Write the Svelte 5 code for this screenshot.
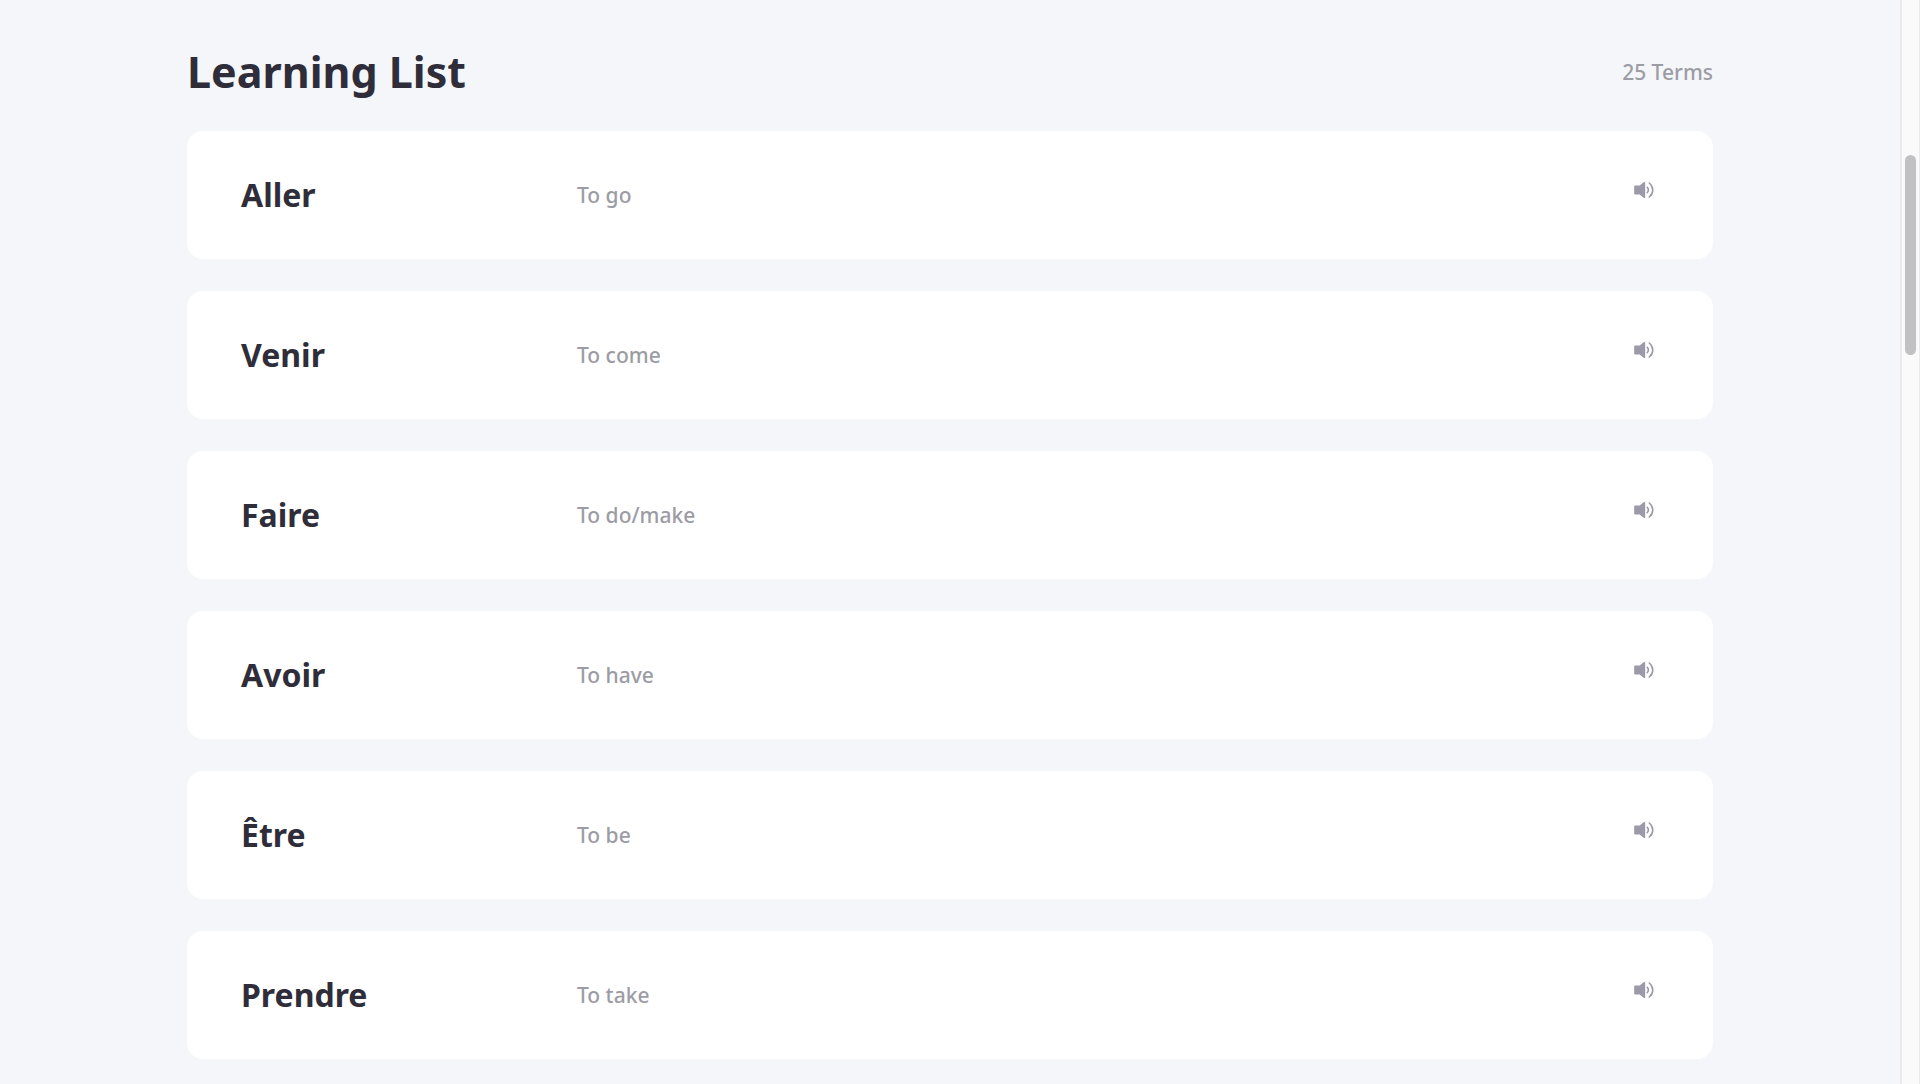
<script lang="ts">
    const total = 25;

    const terms = [
        { word: 'Aller', meaning: 'To go' },
        { word: 'Venir', meaning: 'To come' },
        { word: 'Faire', meaning: 'To do/make' },
        { word: 'Avoir', meaning: 'To have' },
        { word: 'Être', meaning: 'To be' },
        { word: 'Prendre', meaning: 'To take' }
    ];

    function speak(word: string) {
        const utterance = new SpeechSynthesisUtterance(word);
        utterance.lang = 'fr-FR';
        speechSynthesis.speak(utterance);
    }
</script>

<div class="page">
    <main class="content">
        <header class="list-header">
            <h1>Learning List</h1>
            <span class="count">{total} Terms</span>
        </header>

        <ul class="terms">
            {#each terms as term}
                <li class="card">
                    <h2>{term.word}</h2>
                    <p>{term.meaning}</p>
                    <button type="button" aria-label="Listen to {term.word}" onclick={() => speak(term.word)}>
                        <svg viewBox="0 0 20 18" width="20" height="18" aria-hidden="true">
                            <path
                                d="M1 4.500h4.600L10 1.100q1.200-.6 1.200.6v14.600q0 1.200-1.200.6L5.600 13.500H1q-.8 0-.8-.9V5.400q0-.9.8-.9z"
                                fill="currentColor"
                            />
                            <path
                                d="M13.200 6.300q2.400 2.700 0 5.400M15.300 2c4.600 3.800 4.600 10.200 0 14"
                                fill="none"
                                stroke="currentColor"
                                stroke-width="1.600"
                                stroke-linecap="round"
                            />
                        </svg>
                    </button>
                </li>
            {/each}
        </ul>
    </main>

    <div class="scroll-track">
        <div class="scroll-thumb"></div>
    </div>
</div>

<style>
    :global(body) {
        margin: 0;
        background: #f4f6fa;
    }

    .page {
        display: flex;
        min-height: 100vh;
        font-family: 'Noto Sans', sans-serif;
        color: #2e2d39;
    }

    .content {
        flex: 1;
        padding: 42px 187px 24px;
    }

    .list-header {
        display: flex;
        align-items: center;
        justify-content: space-between;
        margin-bottom: 29px;
    }

    h1,
    h2,
    p {
        margin: 0;
    }

    h1 {
        font-size: 43px;
        line-height: 60px;
        font-weight: 700;
    }

    .count,
    p {
        font-size: 21px;
        line-height: 32px;
        font-weight: 500;
        color: #9c9ca5;
    }

    .terms {
        display: flex;
        flex-direction: column;
        gap: 32px;
        margin: 0;
        padding: 0;
        list-style: none;
    }

    .card {
        display: grid;
        grid-template-columns: 336px 1fr auto;
        align-items: center;
        padding: 42px 54px;
        border-radius: 16px;
        background: #fff;
    }

    h2 {
        font-size: 32px;
        line-height: 44px;
        font-weight: 700;
    }

    button {
        display: flex;
        align-self: start;
        padding: 8px 5px;
        border: 0;
        background: none;
        color: #9c9aa8;
        cursor: pointer;
    }

    .scroll-track {
        display: flex;
        flex-direction: column;
        align-items: center;
        box-sizing: border-box;
        width: 20px;
        border-left: 2px solid #ebebee;
        border-right: 1px solid #ebebee;
        background: #fafafa;
    }

    .scroll-thumb {
        width: 11px;
        height: 200px;
        margin-top: 155px;
        border-radius: 6px;
        background: #c1c1c3;
    }
</style>
